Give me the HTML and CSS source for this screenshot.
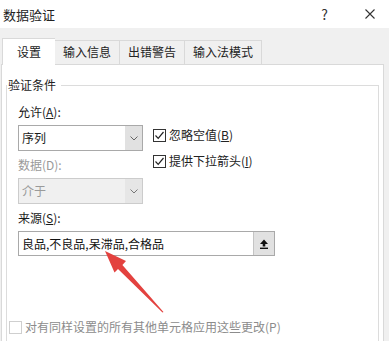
FILE: index.html
```html
<!DOCTYPE html>
<html lang="zh-CN">
<head>
    <meta charset="UTF-8">
    <meta name="viewport" content="width=device-width, initial-scale=1.0">
    <title>数据验证</title>
    <link rel="stylesheet" href="styles.css">
</head>
<body>
<div class="dialog">
    <div class="titlebar">
        <span class="title">数据验证</span>
        <span class="help">?</span>
        <svg class="close" width="10" height="10" viewBox="0 0 10 10">
            <path d="M0.5 0.5 L9.5 9.5 M9.5 0.5 L0.5 9.5" stroke="#333" stroke-width="1.1" fill="none"/>
        </svg>
    </div>
    <div class="body">
        <div class="tabs">
            <div class="tab active">设置</div>
            <div class="tab">输入信息</div>
            <div class="tab">出错警告</div>
            <div class="tab">输入法模式</div>
        </div>
        <div class="panel">
            <fieldset class="group">
                <legend>验证条件</legend>
                <div class="allow-row">
                    <div class="col">
                        <div class="label">允许(<u>A</u>):</div>
                        <div class="select">
                            <span class="select-value">序列</span>
                            <span class="select-btn">
                                <svg width="8" height="5" viewBox="0 0 8 5"><path d="M0.5 0.5 L4 4 L7.5 0.5" stroke="#666" fill="none"/></svg>
                            </span>
                        </div>
                        <div class="label disabled">数据(D):</div>
                        <div class="select disabled">
                            <span class="select-value">介于</span>
                            <span class="select-btn">
                                <svg width="8" height="5" viewBox="0 0 8 5"><path d="M0.5 0.5 L4 4 L7.5 0.5" stroke="#777" fill="none"/></svg>
                            </span>
                        </div>
                    </div>
                    <div class="checks">
                        <div class="check">
                            <span class="box">
                                <svg width="11" height="11" viewBox="0 0 11 11"><path d="M1.5 5.5 L4.2 8.3 L9.5 2" stroke="#222" stroke-width="1.2" fill="none"/></svg>
                            </span>
                            忽略空值(<u>B</u>)
                        </div>
                        <div class="check">
                            <span class="box">
                                <svg width="11" height="11" viewBox="0 0 11 11"><path d="M1.5 5.5 L4.2 8.3 L9.5 2" stroke="#222" stroke-width="1.2" fill="none"/></svg>
                            </span>
                            提供下拉箭头(<u>I</u>)
                        </div>
                    </div>
                </div>
                <div class="label">来源(<u>S</u>):</div>
                <div class="ref-input">
                    <span class="ref-value">良品,不良品,呆滞品,合格品</span>
                    <span class="ref-btn">
                        <svg width="10" height="10" viewBox="0 0 10 10">
                            <path d="M5 0.5 L9 5 L6.3 5 L6.3 7.5 L3.7 7.5 L3.7 5 L1 5 Z" fill="#111"/>
                            <rect x="1" y="8.6" width="8" height="1.4" fill="#111"/>
                        </svg>
                    </span>
                </div>
                <div class="check disabled apply-all">
                    <span class="box"></span>
                    对有同样设置的所有其他单元格应用这些更改(P)
                </div>
            </fieldset>
        </div>
    </div>
    <!-- red pointer drawn over the dialog -->
    <svg class="pointer" width="389" height="341" viewBox="0 0 389 341">
        <polygon points="105,251 126,261 122.4,265 163.5,312 162.5,312.5 118,269 114.5,272.5" fill="#e3423f"/>
    </svg>
</div>
</body>
</html>
```

FILE: styles.css
```css
* {
    box-sizing: border-box;
}
body {
    margin: 0;
    font-family: "Noto Sans CJK SC", "Liberation Sans", sans-serif;
    font-size: 12px;
    color: #1a1a1a;
    background: #f0f0f0;
}
.dialog {
    position: relative;
    width: 389px;
    height: 341px;
    overflow: hidden;
}
.titlebar {
    height: 28px;
    background: #ffffff;
    display: flex;
    align-items: center;
}
.title {
    flex: 1;
    margin-left: 3px;
    font-size: 13px;
    color: #222;
}
.help {
    font-size: 14px;
    color: #333;
    margin-right: 37px;
}
.close {
    margin-right: 14px;
}
.body {
    height: 313px;
    padding-top: 10px;
    background: #f0f0f0;
}
.tabs {
    display: flex;
    align-items: flex-end;
    margin-left: 2px;
    position: relative;
    z-index: 1;
}
.tab {
    height: 24px;
    line-height: 22px;
    padding: 0 8px;
    border: 1px solid #d9d9d9;
    border-left: 0;
    border-bottom: 0;
    background: #f0f0f0;
    color: #222;
}
.tab.active {
    height: 27px;
    line-height: 26px;
    padding: 0 14px;
    margin-bottom: -1px;
    border-left: 1px solid #d9d9d9;
    border-right: 0;
    background: #ffffff;
}
.panel {
    height: 290px;
    margin: 0 5px 0 1px;
    border: 1px solid #d9d9d9;
    background: #ffffff;
}
.group {
    margin: 10px 4px 0 4px;
    padding: 9px 0 40px 11px;
    border: 1px solid #dcdcdc;
    min-width: 0;
}
.group legend {
    margin-left: -11px;
    padding: 0 5px 0 1px;
    line-height: 20px;
    color: #222;
}
.label {
    line-height: 16px;
    height: 16px;
}
.label.disabled {
    color: #9a9a9a;
}
.allow-row {
    display: flex;
}
.col {
    width: 125px;
}
.select {
    display: flex;
    height: 26px;
    margin: 5px 0 6px;
    border: 1px solid #a9a9a9;
    background: #ffffff;
}
.select-value {
    flex: 1;
    line-height: 24px;
    padding-left: 3px;
}
.select-btn {
    width: 17px;
    display: flex;
    align-items: center;
    justify-content: center;
    background: #e1e1e1;
}
.select.disabled {
    border-color: #cccccc;
    background: #f0f0f0;
    color: #9a9a9a;
}
.select.disabled .select-btn {
    background: #e6e6e6;
}
.checks {
    margin-left: 10px;
    padding-top: 23px;
    display: flex;
    flex-direction: column;
    gap: 10px;
}
.check {
    display: flex;
    align-items: center;
    line-height: 16px;
    color: #222;
}
.box {
    width: 13px;
    height: 13px;
    margin-right: 3px;
    border: 1px solid #333;
    background: #fff;
    display: flex;
    align-items: center;
    justify-content: center;
}
.ref-input {
    display: flex;
    width: 257px;
    height: 25px;
    margin-top: 5px;
    border: 1px solid #a9a9a9;
}
.ref-value {
    flex: 1;
    line-height: 23px;
    padding-left: 3px;
    color: #111;
}
.ref-btn {
    width: 21px;
    display: flex;
    align-items: center;
    justify-content: center;
    background: #e1e1e1;
    border-left: 1px solid #c4c4c4;
}
.apply-all {
    margin: 63px 0 0 -9px;
    color: #8c8c8c;
}
.apply-all .box {
    border-color: #cfcfcf;
}
.pointer {
    position: absolute;
    left: 0;
    top: 0;
    pointer-events: none;
}
```
